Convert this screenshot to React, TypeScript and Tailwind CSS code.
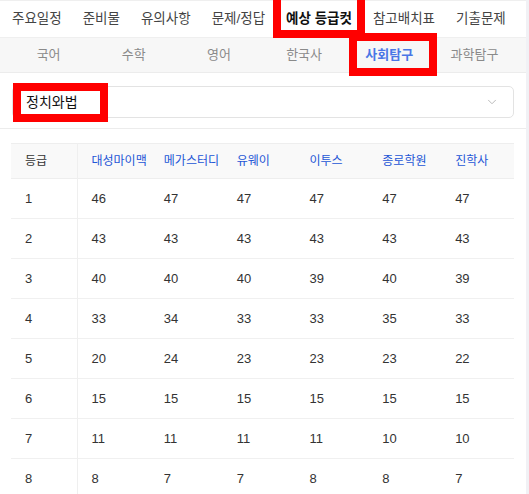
import React from 'react';
import { ChevronDown } from 'lucide-react';

const navItems = ['주요일정', '준비물', '유의사항', '문제/정답', '예상 등급컷', '참고배치표', '기출문제'];
const subjects = ['국어', '수학', '영어', '한국사', '사회탐구', '과학탐구'];
const companies = ['대성마이맥', '메가스터디', '유웨이', '이투스', '종로학원', '진학사'];

const rows: number[][] = [
  [1, 46, 47, 47, 47, 47, 47],
  [2, 43, 43, 43, 43, 43, 43],
  [3, 40, 40, 40, 39, 40, 39],
  [4, 33, 34, 33, 33, 35, 33],
  [5, 20, 24, 23, 23, 23, 22],
  [6, 15, 15, 15, 15, 15, 15],
  [7, 11, 11, 11, 11, 10, 10],
  [8, 8, 7, 7, 8, 8, 7],
];

const App: React.FC = () => {
  return (
    <div className="relative flex h-[494px] w-[529px] overflow-hidden bg-white font-['Liberation_Sans','Noto_Sans_CJK_KR',sans-serif]">
      <div className="flex w-[526px] flex-col">
        {/* Top navigation */}
        <div className="flex h-[38px] shrink-0 items-center gap-[21px] border-y border-[#efefef] pl-[12px] pt-[1px]">
          {navItems.map((item) => (
            <span
              key={item}
              className={`whitespace-nowrap text-[13.5px] ${
                item === '예상 등급컷' ? 'font-bold text-[#111]' : 'text-[#444]'
              }`}
            >
              {item}
            </span>
          ))}
        </div>

        {/* Subject tabs */}
        <div className="flex h-[35px] shrink-0 items-center border-b border-[#ececec] bg-[#f7f7f7] pl-[6px] pr-[9px]">
          {subjects.map((s) => (
            <div
              key={s}
              className={`flex-1 text-center text-[13px] ${
                s === '사회탐구' ? 'font-bold text-[#4a76e6]' : 'text-[#8a8a8a]'
              }`}
            >
              {s}
            </div>
          ))}
        </div>

        {/* Select */}
        <div className="shrink-0 border-b border-[#ececec] px-[12px] pb-[10px] pt-[13px]">
          <div className="flex h-[32px] items-center justify-between rounded-[5px] border border-[#e3e3e3] pl-[13px] pr-[14px]">
            <span className="text-[14px] text-[#111]">정치와법</span>
            <ChevronDown className="h-[14px] w-[14px] text-[#b0b0b0]" strokeWidth={1.5} />
          </div>
        </div>

        {/* Table */}
        <div className="shrink-0 pl-[11px] pr-[12px] pt-[14px]">
          <table className="w-full table-fixed border-collapse text-left">
            <colgroup>
              <col className="w-[66px]" />
              {companies.map((c) => (
                <col key={c} />
              ))}
            </colgroup>
            <thead>
              <tr className="h-[35px] border-y border-[#eeeeee] bg-[#f9f9f9]">
                <th className="border-r border-[#efefef] pl-[14px] text-[12px] font-normal text-[#333]">등급</th>
                {companies.map((c) => (
                  <th key={c} className="pl-[14px] text-[12px] font-normal text-[#2456d6]">
                    {c}
                  </th>
                ))}
              </tr>
            </thead>
            <tbody>
              {rows.map((r) => (
                <tr key={r[0]} className="h-[40px] border-b border-[#f0f0f0]">
                  {r.map((v, i) => (
                    <td
                      key={i}
                      className={`pl-[14px] text-[13px] text-[#333] ${i === 0 ? 'border-r border-[#efefef]' : ''}`}
                    >
                      {v}
                    </td>
                  ))}
                </tr>
              ))}
            </tbody>
          </table>
        </div>
      </div>
      <div className="w-[3px] bg-[#f1f1f5]" />

      {/* Red annotation boxes */}
      <div className="pointer-events-none absolute left-[273px] top-[-8px] h-[46px] w-[92px] border-[8px] border-[#ff0000]" />
      <div className="pointer-events-none absolute left-[349px] top-[33px] h-[43px] w-[88px] border-[8px] border-[#ff0000]" />
      <div className="pointer-events-none absolute left-[13px] top-[83px] h-[39px] w-[95px] border-[8px] border-[#ff0000]" />
    </div>
  );
};

export default App;
